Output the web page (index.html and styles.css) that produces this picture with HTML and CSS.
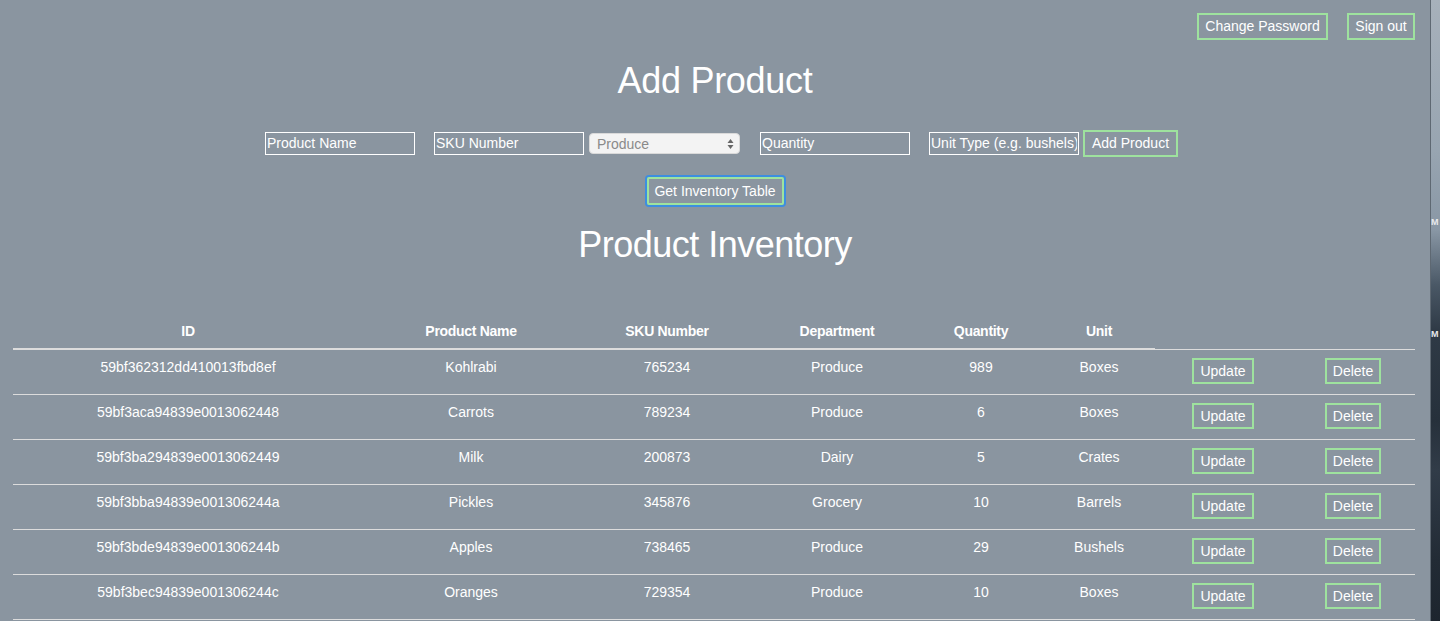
FILE: index.html
```html
<!DOCTYPE html>
<html lang="en">
<head>
<meta charset="utf-8">
<title>Inventory</title>
<link rel="stylesheet" href="styles.css">
</head>
<body>
<div class="screen">
  <main class="app">
    <nav class="topbar">
      <button class="btn btn-top">Change Password</button>
      <button class="btn btn-top">Sign out</button>
    </nav>

    <h1 class="title title-add">Add Product</h1>

    <form class="add-row">
      <input class="field f-name" type="text" placeholder="Product Name">
      <input class="field f-sku" type="text" placeholder="SKU Number">
      <div class="select-wrap">
        <span class="select-text">Produce</span>
        <svg class="select-arrow" width="7" height="12" viewBox="0 0 7 12"><path d="M3.5 1 L6.5 5 L0.5 5 Z M3.5 11 L6.5 7 L0.5 7 Z" fill="#666"/></svg>
      </div>
      <input class="field f-qty" type="text" placeholder="Quantity">
      <input class="field f-unit" type="text" placeholder="Unit Type (e.g. bushels)">
      <button type="button" class="btn btn-add">Add Product</button>
    </form>

    <div class="get-row">
      <button class="btn btn-get">Get Inventory Table</button>
    </div>

    <h1 class="title title-inv">Product Inventory</h1>

    <table class="inv">
      <colgroup>
        <col class="c-id"><col class="c-name"><col class="c-sku"><col class="c-dept"><col class="c-qty"><col class="c-unit"><col class="c-upd"><col class="c-del">
      </colgroup>
      <thead>
        <tr><th>ID</th><th>Product Name</th><th>SKU Number</th><th>Department</th><th>Quantity</th><th>Unit</th></tr>
      </thead>
      <tbody>
        <tr><td>59bf362312dd410013fbd8ef</td><td>Kohlrabi</td><td>765234</td><td>Produce</td><td>989</td><td>Boxes</td><td><button class="btn btn-row">Update</button></td><td><button class="btn btn-row">Delete</button></td></tr>
        <tr><td>59bf3aca94839e0013062448</td><td>Carrots</td><td>789234</td><td>Produce</td><td>6</td><td>Boxes</td><td><button class="btn btn-row">Update</button></td><td><button class="btn btn-row">Delete</button></td></tr>
        <tr><td>59bf3ba294839e0013062449</td><td>Milk</td><td>200873</td><td>Dairy</td><td>5</td><td>Crates</td><td><button class="btn btn-row">Update</button></td><td><button class="btn btn-row">Delete</button></td></tr>
        <tr><td>59bf3bba94839e001306244a</td><td>Pickles</td><td>345876</td><td>Grocery</td><td>10</td><td>Barrels</td><td><button class="btn btn-row">Update</button></td><td><button class="btn btn-row">Delete</button></td></tr>
        <tr><td>59bf3bde94839e001306244b</td><td>Apples</td><td>738465</td><td>Produce</td><td>29</td><td>Bushels</td><td><button class="btn btn-row">Update</button></td><td><button class="btn btn-row">Delete</button></td></tr>
        <tr><td>59bf3bec94839e001306244c</td><td>Oranges</td><td>729354</td><td>Produce</td><td>10</td><td>Boxes</td><td><button class="btn btn-row">Update</button></td><td><button class="btn btn-row">Delete</button></td></tr>
      </tbody>
    </table>
  </main>
  <aside class="desktop">
    <span class="desk-label l1">M</span>
    <span class="desk-label l2">M</span>
  </aside>
</div>
</body>
</html>
```

FILE: styles.css
```css
* { box-sizing: border-box; }

html, body {
  margin: 0;
  padding: 0;
  height: 100%;
  overflow: hidden;
}

body {
  font-family: "Liberation Sans", Arial, Helvetica, sans-serif;
  font-size: 14px;
  color: #ffffff;
  background: #8a95a0;
}

.screen {
  display: flex;
  width: 1440px;
  height: 621px;
}

.app {
  width: 1430px;
  flex: none;
  background: #8a95a0;
  padding-top: 13px;
}

.btn {
  font-family: "Liberation Sans", Arial, Helvetica, sans-serif;
  font-size: 14px;
  color: #ffffff;
  background: transparent;
  border: 2px solid #9ee29e;
  border-radius: 0;
  padding: 0 6px;
  line-height: 20px;
  cursor: pointer;
}

.topbar {
  display: flex;
  justify-content: flex-end;
  gap: 19px;
  padding-right: 15px;
  height: 27px;
}

.btn-top {
  height: 27px;
  padding: 0 0 1px;
}

.btn-top:first-child { width: 131px; }
.btn-top:last-child { width: 68px; }

.title {
  margin: 0;
  text-align: center;
  font-weight: 300;
  font-size: 36px;
  line-height: 40px;
  letter-spacing: -0.3px;
}

.title-add { margin-top: 21px; }
.title-inv { margin-top: 18px; letter-spacing: -0.5px; }

.add-row {
  display: flex;
  justify-content: center;
  align-items: center;
  height: 27px;
  margin: 29px 0 0 0;
  padding-left: 13px;
}

.field {
  width: 150px;
  height: 23px;
  border: 1px solid #ffffff;
  background: transparent;
  color: #ffffff;
  font-family: "Liberation Sans", Arial, Helvetica, sans-serif;
  font-size: 14px;
  padding: 0 1px 1px;
  outline: none;
}

.field::placeholder { color: #ffffff; opacity: 1; }

.f-sku { margin-left: 19px; }
.f-qty { margin-left: 20px; }
.f-unit { margin-left: 19px; }

.select-wrap {
  position: relative;
  width: 151px;
  height: 21px;
  margin-left: 5px;
  background: #f3f3f3;
  border: 1px solid #d9d9d9;
  border-radius: 4px;
  display: flex;
  align-items: center;
  padding-left: 7px;
}

.select-text {
  color: #8a8a8a;
  font-size: 14px;
}

.select-arrow {
  position: absolute;
  right: 5px;
  top: 4px;
}

.btn-add {
  margin-left: 4px;
  width: 95px;
  height: 27px;
  padding: 0 0 1px;
}

.get-row {
  display: flex;
  justify-content: center;
  margin-top: 18px;
  height: 32px;
  align-items: center;
}

.btn-get {
  width: 137px;
  height: 28px;
  padding: 0 0 1px;
  box-shadow: 0 0 0 2px #3d8ee0;
  border-radius: 2px;
}

.inv {
  margin: 47px 0 0 13px;
  width: 1402px;
  border-collapse: collapse;
  table-layout: fixed;
}

.c-id { width: 350px; }
.c-name { width: 216px; }
.c-sku { width: 176px; }
.c-dept { width: 164px; }
.c-qty { width: 124px; }
.c-unit { width: 112px; }
.c-upd { width: 136px; }
.c-del { width: 124px; }

.inv th {
  font-weight: bold;
  text-align: center;
  padding: 9px 8px 7px;
  line-height: 20px;
  border-bottom: 2px solid #dcdcdc;
  letter-spacing: -0.3px;
}

.inv td {
  text-align: center;
  vertical-align: top;
  padding: 7px 8px 11px;
  line-height: 20px;
  border-top: 1px solid #dcdcdc;
  height: 45px;
}

.inv td:nth-child(n+7) {
  padding-top: 8px;
  padding-bottom: 10px;
}

.inv tbody tr:last-child td {
  border-bottom: 1px solid #dcdcdc;
}

.btn-row {
  height: 26px;
  line-height: 20px;
  padding: 0 6px;
  vertical-align: top;
}

.desktop {
  position: relative;
  flex: 1;
  border-left: 1px solid #5e6872;
  background: linear-gradient(to bottom, #a7b1bb 0px, #98a5b1 150px, #8997a5 230px, #4a5866 285px, #2f3a46 330px, #26303b 420px, #313c48 470px, #222b35 560px, #1d252e 621px);
}

.desk-label {
  position: absolute;
  left: 0;
  font-size: 9px;
  color: #e8eaec;
  font-weight: bold;
}

.l1 { top: 217px; }
.l2 { top: 329px; }
```
